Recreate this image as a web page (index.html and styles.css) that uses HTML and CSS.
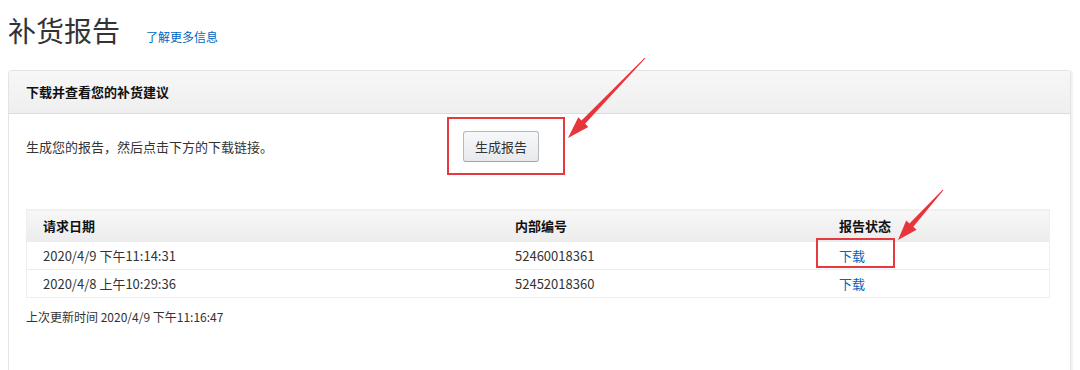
FILE: index.html
```html
<!DOCTYPE html>
<html lang="zh-CN">
<head>
  <meta charset="UTF-8">
  <title>补货报告</title>
  <link rel="stylesheet" href="styles.css">
</head>
<body>

<div class="page">
  <!-- Title -->
  <div class="title-row">
    <h1>补货报告</h1>
    <a href="#" class="more-link">了解更多信息</a>
  </div>

  <!-- Report panel -->
  <div class="panel">
    <div class="panel-header">下载并查看您的补货建议</div>
    <div class="panel-body">
      <div class="generate-row">
        <span class="generate-text">生成您的报告，然后点击下方的下载链接。</span>
        <button class="btn">生成报告</button>
      </div>

      <table class="report-table">
        <thead>
          <tr>
            <th class="col-date">请求日期</th>
            <th class="col-id">内部编号</th>
            <th>报告状态</th>
          </tr>
        </thead>
        <tbody>
          <tr>
            <td>2020/4/9 下午11:14:31</td>
            <td>52460018361</td>
            <td><a href="#">下载</a></td>
          </tr>
          <tr>
            <td>2020/4/8 上午10:29:36</td>
            <td>52452018360</td>
            <td><a href="#">下载</a></td>
          </tr>
        </tbody>
      </table>

      <p class="updated">上次更新时间 2020/4/9 下午11:16:47</p>
    </div>
  </div>
</div>

<!-- Red annotations drawn over the screenshot -->
<div class="mark mark-button"></div>
<div class="mark mark-download"></div>
<svg class="arrows" width="1080" height="370" viewBox="0 0 1080 370">
  <polygon points="645.4,58.3 585.1,123.8 588.3,127.0 568,138 578.3,117.2 581.5,120.4 644.6,57.7"/>
  <polygon points="943.4,190.3 913.3,226.8 916.6,229.8 898,240 906.2,220.4 909.5,223.4 942.6,189.7"/>
</svg>

</body>
</html>
```

FILE: styles.css
```css
/* Basic Styling */
body {
  margin: 0;
  font-family: "Noto Sans CJK SC", "Liberation Sans", sans-serif;
  color: #333;
  background: #fff;
}
.page {
  padding: 10px 8px 0 8px;
}
.title-row {
  display: flex;
  align-items: baseline;
  gap: 26px;
  height: 40px;
}
.title-row h1 {
  margin: 0;
  font-size: 28px;
  line-height: 40px;
  font-weight: 400;
  color: #333;
}
.more-link {
  font-size: 12px;
  color: #0066c0;
  text-decoration: none;
}

/* Panel */
.panel {
  margin-top: 20px;
  width: 1061px;
  border: 1px solid #e3e3e3;
  border-radius: 4px;
  box-shadow: 2px 0 0 #f3f3f3;
}
.panel-header {
  height: 42px;
  line-height: 42px;
  padding: 0 17px;
  font-size: 13px;
  font-weight: bold;
  color: #111;
  background: linear-gradient(#f7f7f7, #efefef);
  border-bottom: 1px solid #dcdcdc;
  border-radius: 4px 4px 0 0;
}
.panel-body {
  padding: 17px 20px 50px 17px;
}
.generate-row {
  display: grid;
  grid-template-columns: 437px auto;
  align-items: center;
  height: 31px;
}
.generate-text {
  font-size: 13px;
  color: #333;
}
.btn {
  width: 76px;
  height: 31px;
  padding: 0;
  font-family: inherit;
  font-size: 13px;
  color: #333;
  background: linear-gradient(#f7f8fa, #e7e9ec);
  border: 1px solid #b5b8bd;
  border-bottom-color: #a2a6ac;
  border-radius: 3px;
  cursor: pointer;
}

/* Table */
.report-table {
  width: 1024px;
  margin-top: 47px;
  border-collapse: collapse;
  border: 1px solid #efefef;
  font-size: 13px;
}
.report-table th {
  height: 31px;
  padding: 0 16px;
  text-align: left;
  font-weight: bold;
  color: #111;
  background: linear-gradient(#f7f7f7, #ececec);
}
.report-table td {
  height: 27px;
  padding: 0 16px;
  color: #333;
  border-top: 1px solid #ececec;
}
.col-date {
  width: 440px;
}
.col-id {
  width: 292px;
}
.report-table a {
  color: #0066c0;
  text-decoration: none;
}
.updated {
  margin: 10px 0 0 0;
  font-size: 12px;
  line-height: 18px;
  color: #333;
}

/* Annotations */
.mark {
  position: absolute;
  border: 2px solid #e5393f;
  box-sizing: border-box;
}
.mark-button {
  left: 447px;
  top: 117px;
  width: 118px;
  height: 58px;
}
.mark-download {
  left: 816px;
  top: 238px;
  width: 79px;
  height: 30px;
}
.arrows {
  position: absolute;
  left: 0;
  top: 0;
  pointer-events: none;
}
.arrows polygon {
  fill: #e8353b;
}
```
